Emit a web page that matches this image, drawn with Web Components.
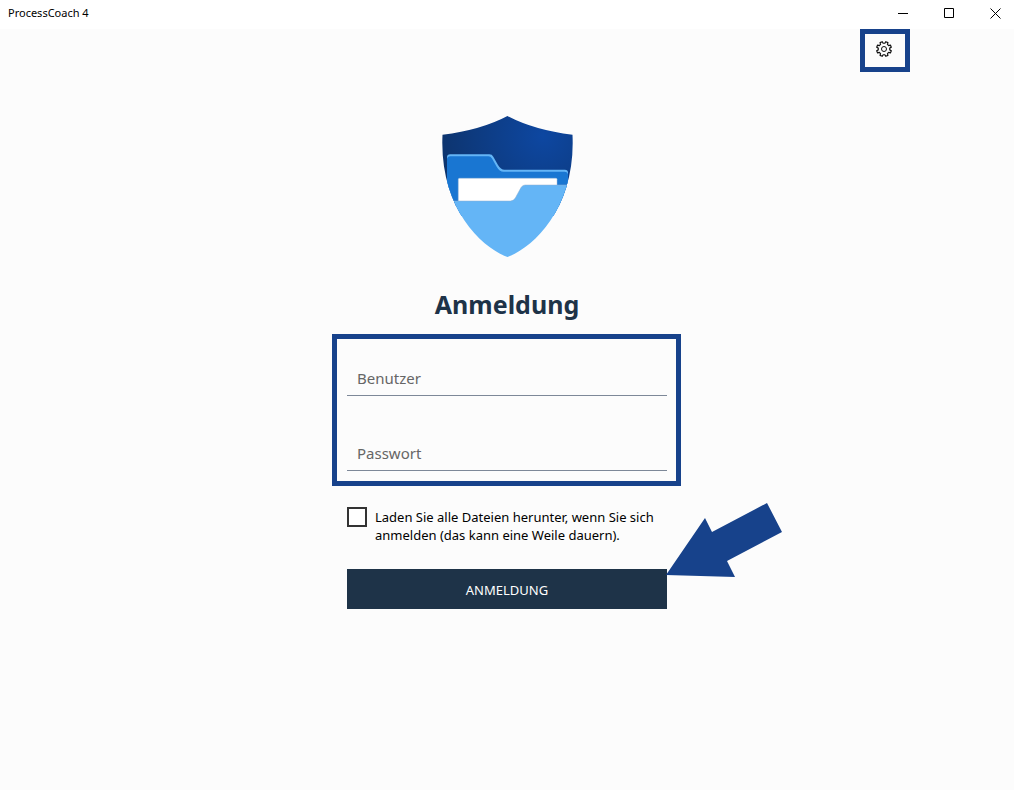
<!DOCTYPE html>
<html lang="de">
<head>
<meta charset="utf-8">
<meta name="viewport" content="width=device-width, initial-scale=1">
<title>ProcessCoach 4</title>
<style>
  body { margin: 0; background: #fff; color: #000; font-family: "Noto Sans", "Open Sans", sans-serif; }
</style>
</head>
<body>
<app-window>
  <title-bar slot="title">ProcessCoach 4</title-bar>
  <settings-button slot="tools"></settings-button>
  <shield-logo></shield-logo>
  <login-form></login-form>
</app-window>

<script>
const define = (name, html, setup) => {
  const template = document.createElement('template');
  template.innerHTML = html;
  customElements.define(name, class extends HTMLElement {
    constructor() {
      super();
      this.attachShadow({ mode: 'open' }).append(template.content.cloneNode(true));
    }
    connectedCallback() { if (setup) setup(this, this.shadowRoot); }
  });
};

define('app-window', `
  <style>
    :host { display: flex; flex-direction: column; min-height: 100vh; box-sizing: border-box; border: solid #fff; border-width: 0 1px 1px 0; }
    main { flex: 1; display: flex; flex-direction: column; background: #fcfcfc; }
    .tools { display: flex; justify-content: flex-end; padding-right: 104px; }
    .content { display: flex; flex-direction: column; align-items: center; padding-top: 44px; }
  </style>
  <slot name="title"></slot>
  <main>
    <div class="tools"><slot name="tools"></slot></div>
    <div class="content"><slot></slot></div>
  </main>`);

define('title-bar', `
  <style>
    :host { display: flex; align-items: center; height: 29px; background: #fff; }
    .name { flex: 1; padding: 0 0 3px 8px; font-size: 11px; line-height: 16px; }
    button { width: 46px; height: 29px; padding: 0 0 2px; border: 0; background: none; display: flex; align-items: center; justify-content: center; }
    button:last-child { width: 42px; padding-left: 4px; }
    svg { width: 11px; height: 11px; fill: none; stroke: #000; }
  </style>
  <span class="name"><slot></slot></span>
  <button aria-label="Minimieren"><svg viewBox="0 0 11 11"><path d="M0 5.5h10"/></svg></button>
  <button aria-label="Maximieren"><svg viewBox="0 0 11 11"><path d="M.5 .5h9v9h-9z"/></svg></button>
  <button aria-label="Schließen"><svg viewBox="0 0 11 11"><path d="M.5 .5l10 10M10.500 .5l-10 10"/></svg></button>`);

define('settings-button', `
  <style>
    :host { display: block; }
    button { display: flex; justify-content: center; width: 50px; height: 43px; box-sizing: border-box; padding: 7px 2px 0 0; border: 5px solid #17428b; background: none; }
    svg { width: 16px; height: 16px; fill: none; stroke: #111; }
  </style>
  <button aria-label="Einstellungen"><svg viewBox="-8 -8 16 16"><path id="gear" stroke-width="1.200" stroke-linejoin="round"/><circle r="2.500"/></svg></button>`,
  (host, root) => {
    const outline = [];
    for (let tooth = 0; tooth < 8; tooth++) {
      for (const [offset, radius] of [[-14, 5.8], [-9, 7.5], [9, 7.5], [14, 5.8]]) {
        const angle = (22.5 + tooth * 45 + offset) * Math.PI / 180;
        outline.push((radius * Math.cos(angle)).toFixed(2) + ' ' + (radius * Math.sin(angle)).toFixed(2));
      }
    }
    root.getElementById('gear').setAttribute('d', 'M' + outline.join('L') + 'Z');
  });

define('shield-logo', `
  <style>
    :host { display: block; width: 131px; height: 141px; }
    svg { display: block; width: 100%; height: 100%; }
  </style>
  <svg viewBox="0 0 131 141" role="img" aria-label="ProcessCoach">
    <defs>
      <radialGradient id="navy" gradientUnits="userSpaceOnUse" cx="101" cy="20" r="110">
        <stop offset="0" stop-color="#0d47a1"/><stop offset="1" stop-color="#0d336b"/>
      </radialGradient>
      <clipPath id="shield"><path d="M65.500 0Q92 14 130.500 18.700C134 92 91 132 65.500 141C40 132-3 92 .5 18.700Q39 14 65.500 0Z"/></clipPath>
    </defs>
    <g clip-path="url(#shield)">
      <path fill="url(#navy)" d="M0 0h131v90H0z"/>
      <path fill="#64b5f6" d="M5 100V41.500Q5 38.300 8.200 38.300H47.500Q50 38.300 51.300 40.700L56 49Q58.800 53.800 62.500 53.800H123Q126 53.800 126 57V100Z"/>
      <path fill="#1976d2" d="M5 100V43Q5.500 40.300 8.200 40.300H46.500Q48.700 40.300 50 42.600L54.500 50.500Q57.500 55.800 61.500 55.800H122.500Q125 55.800 126 58V100Z"/>
      <path fill="#fff" stroke="#a9bfd8" stroke-width=".5" d="M16.300 90V63.500Q16.300 62.300 17.500 62.300H114Q115 62.300 115 63.300V90Z"/>
      <path fill="#64b5f6" stroke="#8daed0" stroke-width=".5" d="M-2 85H68.500Q71.500 85 73.300 82L79 71.600Q80.500 69 83 69H135V145H-2Z"/>
    </g>
  </svg>`);

define('text-field', `
  <style>
    :host { display: block; }
    input { display: block; width: 100%; height: 33px; box-sizing: border-box; padding: 0 10px 2px; border: 0; border-bottom: 1px solid #7d8898; border-radius: 0; background: none; font: 15px/20px "Noto Sans", "Open Sans", sans-serif; color: #000; outline: none; }
    input::placeholder { color: #666; opacity: 1; }
  </style>
  <input>`,
  (host, root) => {
    const input = root.querySelector('input');
    input.type = host.getAttribute('type');
    input.placeholder = host.getAttribute('label');
    input.setAttribute('aria-label', host.getAttribute('label'));
  });

define('check-option', `
  <style>
    :host { display: block; }
    label { display: flex; align-items: flex-start; gap: 8px; }
    input { appearance: none; flex: none; width: 20px; height: 20px; box-sizing: border-box; margin: 0; border: 2px solid #333; background: #fff; }
    input:checked { background: #1e3348; }
    span { font-size: 13px; line-height: 18px; padding-top: 1px; }
  </style>
  <label><input type="checkbox"><span><slot></slot></span></label>`);

define('pointer-arrow', `
  <style>
    :host { display: block; width: 116px; height: 74px; }
    svg { display: block; }
  </style>
  <svg width="116" height="74" viewBox="0 0 116 74" aria-hidden="true"><path fill="#17428b" d="M0 72L39 15L46 29L101 0L116 29L61 58L69 74Z"/></svg>`);

define('login-form', `
  <style>
    :host { display: block; width: 100%; max-width: 320px; }
    h1 { margin: 29px 0 12px; font-size: 25px; line-height: 36px; font-weight: 700; text-align: center; color: #1e3348; }
    .fields { display: grid; gap: 42px; margin: 0 -14px 21px -15px; padding: 24px 9px 10px 10px; border: 5px solid #17428b; }
    .submit { position: relative; margin-top: 25px; }
    button { display: block; width: 100%; height: 40px; padding: 1px 0 0; border: 0; background: #1e3348; color: #fff; font: 13px/20px "Noto Sans", "Open Sans", sans-serif; }
    pointer-arrow { position: absolute; left: 100%; bottom: 32px; margin-left: -1px; }
  </style>
  <form>
    <h1>Anmeldung</h1>
    <div class="fields">
      <text-field type="text" label="Benutzer"></text-field>
      <text-field type="password" label="Passwort"></text-field>
    </div>
    <check-option>Laden Sie alle Dateien herunter, wenn Sie sich anmelden (das kann eine Weile dauern).</check-option>
    <div class="submit">
      <button type="button">ANMELDUNG</button>
      <pointer-arrow></pointer-arrow>
    </div>
  </form>`);
</script>
</body>
</html>
